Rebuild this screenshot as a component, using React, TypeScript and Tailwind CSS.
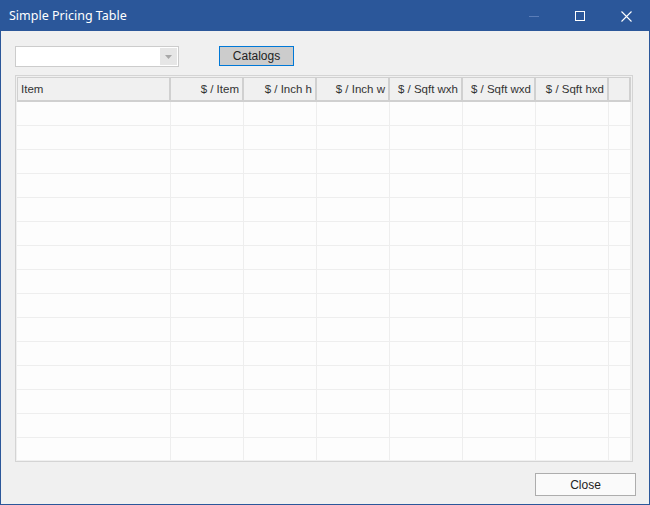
const COLS: { label: string; w: string; align: string }[] = [
  { label: 'Item', w: 'w-[154px]', align: 'justify-start pl-[3px]' },
  { label: '$ / Item', w: 'w-[73px]', align: 'justify-end pr-[3px]' },
  { label: '$ / Inch h', w: 'w-[73px]', align: 'justify-end pr-[3px]' },
  { label: '$ / Inch w', w: 'w-[73px]', align: 'justify-end pr-[3px]' },
  { label: '$ / Sqft wxh', w: 'w-[73px]', align: 'justify-end pr-[3px]' },
  { label: '$ / Sqft wxd', w: 'w-[73px]', align: 'justify-end pr-[3px]' },
  { label: '$ / Sqft hxd', w: 'w-[73px]', align: 'justify-end pr-[3px]' },
  { label: '', w: 'w-[22px]', align: '' },
];

const ROWS = Array.from({ length: 15 }, (_, i) => i);

export default function App() {
  return (
    <div
      className="w-[650px] h-[505px] border border-[#2b579a] bg-[#f0f0f0] flex flex-col overflow-hidden"
      style={{ fontFamily: '"Liberation Sans", Arial, sans-serif' }}
    >
      {/* title bar */}
      <div className="h-[30px] bg-[#2b579a] flex items-center text-white shrink-0">
        <div className="pl-[8px] text-[12.5px] flex-1" style={{ fontFamily: '"Noto Sans", "Open Sans", sans-serif' }}>
          Simple Pricing Table
        </div>
        <div className="w-[46px] h-full flex items-center justify-center">
          <div className="w-[10px] h-px bg-[#5a7db8]" />
        </div>
        <div className="w-[46px] h-full flex items-center justify-center">
          <div className="w-[10px] h-[10px] border border-white" />
        </div>
        <div className="w-[46px] h-full flex items-center justify-center">
          <svg width="11" height="11" viewBox="0 0 11 11">
            <path d="M0.5 0.5 L10.5 10.5 M10.5 0.5 L0.5 10.5" stroke="white" strokeWidth="1.1" />
          </svg>
        </div>
      </div>

      {/* client */}
      <div className="flex-1 flex flex-col px-[14px]">
        <div className="flex items-start mt-[15px] h-[21px]">
          <div className="w-[164px] h-[21px] border border-[#cccccc] bg-white flex justify-end items-stretch p-px">
            <div className="w-[17px] bg-[#e6e6e6] flex items-center justify-center">
              <svg width="7" height="4" viewBox="0 0 7 4">
                <path d="M0 0 H7 L3.5 4 Z" fill="#a8a8a8" />
              </svg>
            </div>
          </div>
          <button className="ml-[40px] w-[75px] h-[20px] border border-[#0078d7] bg-[#cccccc] text-[12px] text-[#222] flex items-center justify-center">
            Catalogs
          </button>
        </div>

        {/* grid */}
        <div className="mt-[8px] w-[618px] h-[387px] border border-[#d4d4d4] bg-[#f0f0f0] p-px flex flex-col overflow-hidden">
          <div className="flex h-[25px] shrink-0">
            {COLS.map((c, i) => (
              <div
                key={i}
                className={`${c.w} h-[25px] border border-[#d0d0d0] border-r-2 border-b-2 ${i === 0 ? '' : 'border-l-0'} bg-[#f0f0f0] flex items-center pt-[2px] ${c.align} text-[11.5px] text-[#333] whitespace-nowrap overflow-hidden`}
              >
                {c.label}
              </div>
            ))}
          </div>
          <div className="flex-1 bg-[#fdfdfd] overflow-hidden">
            {ROWS.map((r) => (
              <div key={r} className="flex h-[24px]">
                {COLS.map((c, i) => (
                  <div key={i} className={`${c.w} h-[24px] border-b border-r border-[#eeeeee]`} />
                ))}
              </div>
            ))}
          </div>
        </div>

        <div className="flex justify-end mt-[11px] -mr-[1px]">
          <button className="w-[101px] h-[23px] border border-[#adadad] bg-[#fafafa] text-[12px] text-[#222] flex items-center justify-center">
            Close
          </button>
        </div>
      </div>
    </div>
  );
}
